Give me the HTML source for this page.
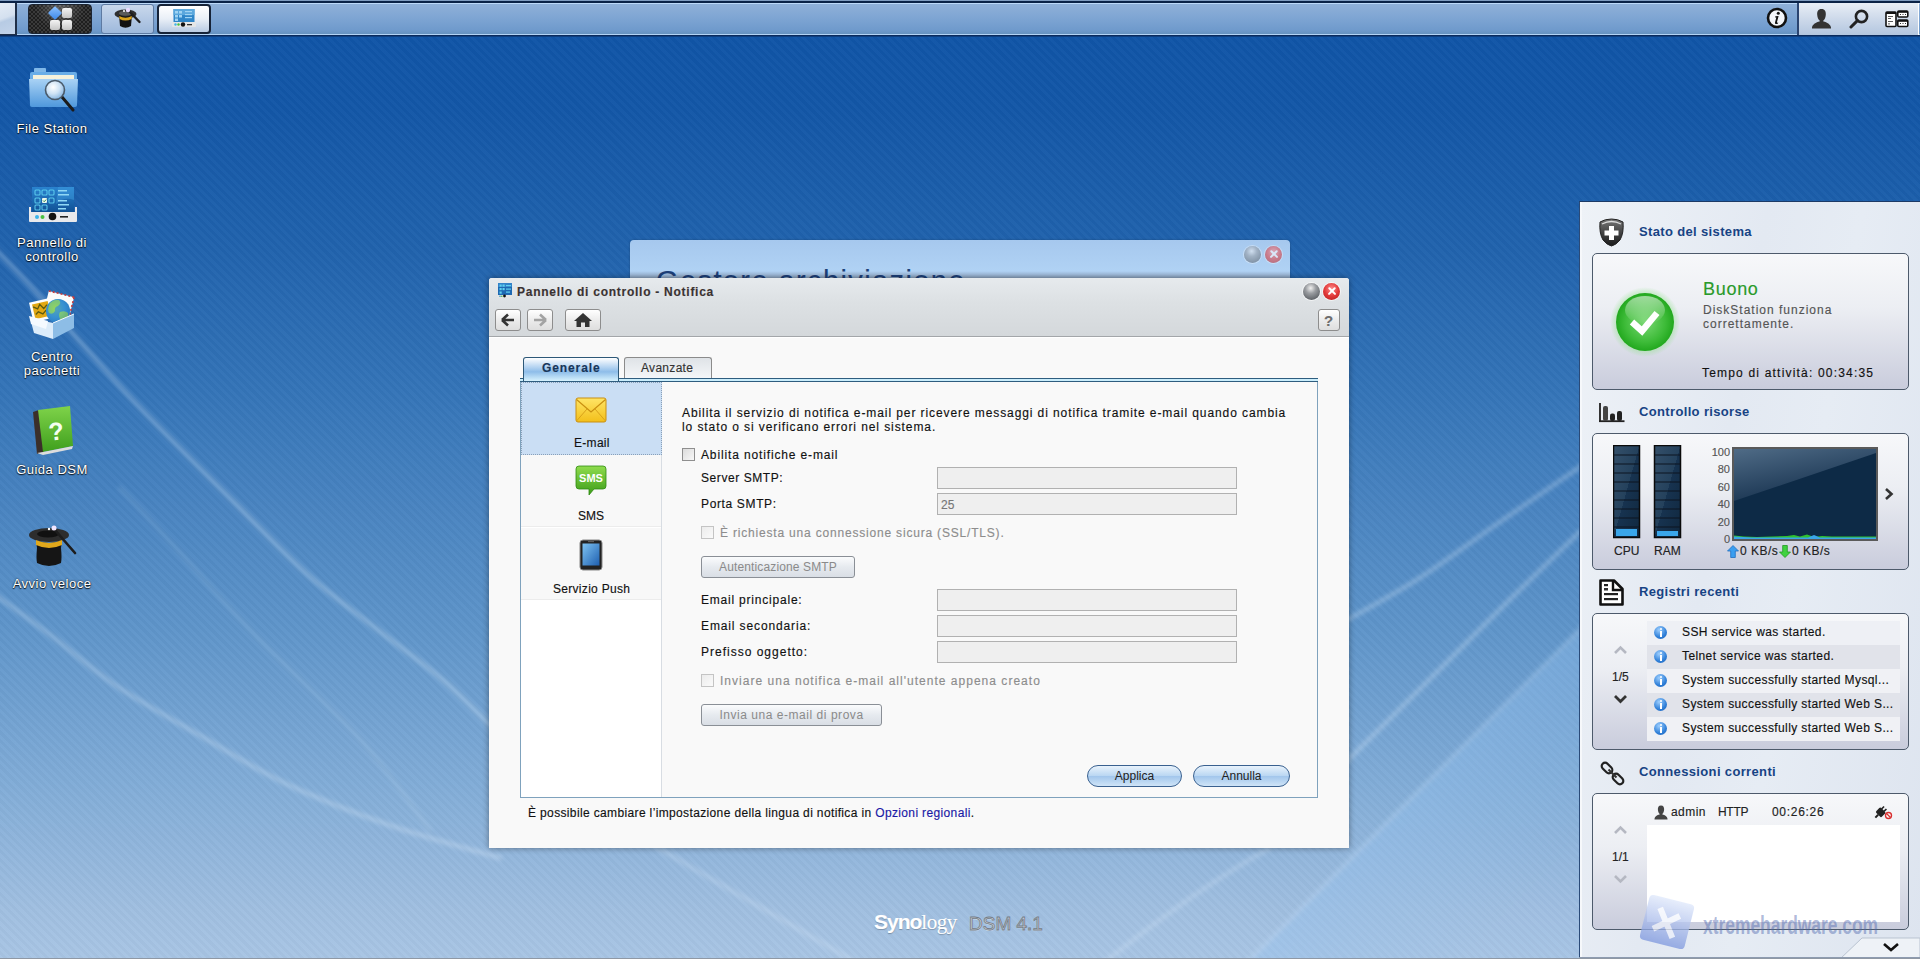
<!DOCTYPE html>
<html><head><meta charset="utf-8">
<style>
*{margin:0;padding:0;box-sizing:border-box}
html,body{width:1920px;height:959px;overflow:hidden}
body{position:relative;font-family:"Liberation Sans",sans-serif;font-size:12px;color:#000;
background:linear-gradient(to bottom,#1055a7 36px,#1357a7 110px,#2163ad 250px,#3474b8 390px,#5f95ca 630px,#7eaad6 770px,#a0bfe0 910px,#a8c5e4 959px);}
.a{position:absolute}
#stripes{position:absolute;left:0;top:0;width:1920px;height:959px;
background:repeating-linear-gradient(45deg,rgba(255,255,255,0.02) 0px,rgba(255,255,255,0.02) 3px,rgba(0,0,0,0.018) 3px,rgba(0,0,0,0.018) 6px);}
/* taskbar */
#taskbar{position:absolute;left:0;top:0;width:1920px;height:37px;
background:linear-gradient(to bottom,#7f9cc0 0px,#7f9cc0 1px,#0a2246 1px,#0a2246 3px,#bcd9f8 3px,#bcd9f8 4px,#8fb0d8 4px,#7ea5d3 18px,#6f9acc 30px,#6693c0 34px,#b2d3f5 34px,#b2d3f5 35px,#0a2a5c 35px,#0a2a5c 36px,#0e3f80 36px,#0e3f80 37px)}
.dl{position:absolute;width:120px;text-align:center;color:#fff;font-size:13px;line-height:13.5px;letter-spacing:0.5px;
text-shadow:0 0 2px rgba(0,0,0,.9),0 1px 1px rgba(0,0,0,.8)}

.win{position:absolute;font-family:"Liberation Sans",sans-serif}
.cbtn{position:absolute;width:17px;height:17px;border-radius:50%}
.gray{background:radial-gradient(circle at 45% 30%,#f0f0f0 0,#9a9da1 35%,#5d6166 80%,#4a4d52 100%);box-shadow:0 0 0 1px rgba(255,255,255,.6)}
.red{background:radial-gradient(circle at 50% 35%,#ff8d8d 0,#e23a3a 50%,#b41818 100%);box-shadow:0 0 0 1px rgba(255,255,255,.6)}
.red:before,.red:after{content:"";position:absolute;left:3.5px;top:7.3px;width:10px;height:2.4px;background:#fff;border-radius:1px;transform:rotate(45deg)}
.red:after{transform:rotate(-45deg)}
.nbtn{position:absolute;top:309px;height:22px;border:1px solid #8d8d8d;border-radius:3px;background:linear-gradient(#ffffff,#ececec 50%,#dedede)}
.tx{position:absolute;white-space:nowrap;font-size:12px;color:#111;-webkit-text-stroke:0.15px currentColor}
.inp{position:absolute;left:937px;width:300px;height:22px;border:1px solid #b1b1b1;background:#efefef}
.chk{position:absolute;width:13px;height:13px;border:1px solid #8f8f8f;background:linear-gradient(135deg,#dcdcdc,#f8f8f8)}
.chk.dis{border-color:#c4c4c4;background:linear-gradient(135deg,#ececec,#fafafa)}
.gbtn{position:absolute;height:22px;border:1px solid #8a8f96;border-radius:3px;background:linear-gradient(#fbfcfd,#e6eaef 50%,#d9dee5);color:#8a8a8a;font-size:12px;text-align:center;line-height:20px}
.pbtn{position:absolute;top:765px;height:22px;border:1px solid #3a6190;border-radius:12px;background:linear-gradient(#e9f3fc,#b9d6f2 50%,#a2c6ec 51%,#cfe4f7);color:#222;font-size:12px;text-align:center;line-height:20px}

.wb{position:absolute;left:1592px;width:317px;border:1px solid #4d5a6b;border-radius:5px;background:linear-gradient(#f7f8fa 0%,#eceef3 40%,#c9ccdc 100%);overflow:hidden}
.wh{position:absolute;left:1639px;font-size:13px;font-weight:bold;color:#174384;white-space:nowrap;letter-spacing:0.35px}
.lr{position:absolute;left:1647px;width:253px;height:24px}
.ii{position:absolute;left:1654px;width:13px;height:13px;border-radius:50%;background:radial-gradient(circle at 40% 30%,#9fd0ff,#2f7fd8 60%,#1c5fb5);}
.ii:before{content:"";position:absolute;left:5.5px;top:2px;width:2px;height:2px;background:#fff;border-radius:1px}
.ii:after{content:"";position:absolute;left:5.5px;top:5px;width:2px;height:6px;background:#fff}
.lt{position:absolute;left:1682px;font-size:12px;color:#111;white-space:nowrap;-webkit-text-stroke:0.15px currentColor;letter-spacing:0.4px}
</style></head>
<body>
<div id="stripes"></div>
<svg class="a" style="left:0;top:0" width="1920" height="959">
 <defs><filter id="bl" x="-10%" y="-10%" width="120%" height="120%"><feGaussianBlur stdDeviation="2"/></filter>
 <filter id="bl2" x="-20%" y="-20%" width="140%" height="140%"><feGaussianBlur stdDeviation="10"/></filter><filter id="bl3" x="-20%" y="-20%" width="140%" height="140%"><feGaussianBlur stdDeviation="3"/></filter></defs>
 <g fill="none" stroke="#e6f3ff" filter="url(#bl)" stroke-linecap="round">
  <path d="M-10.0,244.0 C-2.2,252.1 13.2,267.1 36.5,292.6 C59.8,318.1 96.9,361.9 130.0,397.0 C163.1,432.1 205.5,473.5 235.0,503.0 C264.5,532.5 283.2,552.8 307.0,574.0 C330.8,595.2 355.2,612.2 378.0,630.0 C400.8,647.8 423.7,663.5 444.0,681.0 C464.3,698.5 490.7,726.0 500.0,735.0" stroke-opacity="0.35" stroke-width="4"/>
  <path d="M-10.0,591.0 C0.2,598.4 29.8,619.6 51.0,635.5 C72.2,651.4 92.0,669.6 117.5,686.6 C143.0,703.6 175.9,721.5 204.0,737.7 C232.1,753.9 255.3,769.2 286.0,783.7 C316.7,798.2 352.3,812.2 388.0,824.6 C423.7,837.0 481.3,852.4 500.0,858.0" stroke-opacity="0.33" stroke-width="4"/>
  <path d="M120.0,488.0 C125.5,493.8 130.5,498.5 153.0,523.0 C175.5,547.5 220.8,599.3 255.0,635.0 C289.2,670.7 328.8,704.5 358.0,737.0 C387.2,769.5 418.0,814.5 430.0,830.0" stroke-opacity="0.12" stroke-width="4"/>
  <path d="M650,843 C700,873 780,918 855,962" stroke-opacity="0.25" stroke-width="4"/>
  <path d="M1340.0,624.0 C1353.0,616.5 1391.9,595.6 1418.0,579.0 C1444.1,562.4 1467.7,544.1 1496.4,524.3 C1525.1,504.5 1574.4,470.7 1590.0,460.0" stroke-opacity="0.32" stroke-width="4"/>
  <path d="M1340.0,768.0 C1356.5,751.7 1410.8,698.0 1439.0,670.0 C1467.2,642.0 1484.2,624.7 1509.4,600.0 C1534.6,575.3 1576.6,535.0 1590.0,522.0" stroke-opacity="0.32" stroke-width="4"/>
  <path d="M1105,962 C1170,910 1230,870 1270,848" stroke-opacity="0.25" stroke-width="4"/>
  <path d="M1238,972 L1600,610" stroke-opacity="0.22" stroke-width="4"/>
 </g>
 <linearGradient id="wedge" gradientUnits="userSpaceOnUse" x1="1413" y1="790" x2="1519" y2="896"><stop offset="0" stop-color="#96c3f0" stop-opacity="0.38"/><stop offset="1" stop-color="#96c3f0" stop-opacity="0.06"/></linearGradient>
 <path d="M1238,972 L1600,610 L1600,972 Z" fill="url(#wedge)" filter="url(#bl3)"/>
</svg>


<!-- desktop icons -->
<svg class="a" style="left:0;top:60px" width="110" height="540" viewBox="0 60 110 540">
 <defs>
  <linearGradient id="fold" x1="0" y1="0" x2="0" y2="1"><stop offset="0" stop-color="#a9d2f5"/><stop offset="1" stop-color="#4f98dc"/></linearGradient>
  <radialGradient id="lens" cx="0.4" cy="0.35" r="0.7"><stop offset="0" stop-color="#ffffff"/><stop offset="0.5" stop-color="#cfe3f5"/><stop offset="1" stop-color="#7fb0dd"/></radialGradient>
  <linearGradient id="book" x1="0" y1="0" x2="0" y2="1"><stop offset="0" stop-color="#7fd34a"/><stop offset="1" stop-color="#3f9f1d"/></linearGradient>
  <linearGradient id="box" x1="0" y1="0" x2="0" y2="1"><stop offset="0" stop-color="#e7f3fd"/><stop offset="1" stop-color="#9fc8ea"/></linearGradient>
  <radialGradient id="globe" cx="0.4" cy="0.4" r="0.6"><stop offset="0" stop-color="#9fe07a"/><stop offset="0.6" stop-color="#4aa6d6"/><stop offset="1" stop-color="#2a6fb0"/></radialGradient>
 </defs>
 <!-- File Station -->
 <path d="M34,72 L34,69 Q34,68 35,68 L45,68 Q46,68 46,69 L46,72Z" fill="#7fb7e8"/>
 <rect x="30" y="72" width="47" height="34" rx="2" fill="#6aaee8"/>
 <rect x="33" y="75" width="41" height="5" fill="#f6f2dc"/>
 <path d="M29,79 L78,79 L77,105 Q77,107 75,107 L32,107 Q30,107 30,105Z" fill="url(#fold)"/>
 <line x1="62" y1="97" x2="73" y2="110" stroke="#1b1b1b" stroke-width="3" stroke-linecap="round"/>
 <circle cx="55" cy="90" r="9.5" fill="url(#lens)" stroke="#4a5a6a" stroke-width="1.6"/>
 <!-- Control panel -->
 <defs><linearGradient id="cps" x1="0" y1="0" x2="0" y2="1"><stop offset="0" stop-color="#2a83cf"/><stop offset="1" stop-color="#0f4f93"/></linearGradient></defs>
 <rect x="32" y="187" width="42" height="26" fill="url(#cps)"/>
 <path d="M58,187 L74,187 L74,200 Q64,196 56,204Z" fill="#3b98dc" opacity="0.5"/>
 <g fill="none" stroke="#5fd0f0" stroke-width="1.1" opacity="0.9"><rect x="35" y="190" width="5" height="5" rx="1"/><rect x="42" y="190" width="5" height="5" rx="1"/><rect x="49" y="190" width="5" height="5" rx="1"/>
 <rect x="35" y="198" width="5" height="5" rx="1"/><rect x="49" y="198" width="5" height="5" rx="1"/><rect x="35" y="205" width="5" height="5" rx="1"/><rect x="42" y="205" width="5" height="5" rx="1"/></g>
 <rect x="42" y="198" width="5" height="5" rx="1" fill="#e8f8ee"/><path d="M43,200.5 l1.2,1.2 l2,-2.2" stroke="#1a7a3a" stroke-width="0.9" fill="none"/>
 <g fill="#8fd8f5"><rect x="58" y="190" width="9" height="1.5"/><rect x="58" y="194" width="11" height="1.5"/><rect x="58" y="200" width="9" height="1.5"/><rect x="58" y="204" width="11" height="1.5"/><rect x="58" y="208" width="8" height="1.5"/></g>
 <path d="M29,207 L31,207 L31,212 L75,212 L75,207 L77,207 L77,221 Q77,222 76,222 L30,222 Q29,222 29,221Z" fill="#e9e9ec"/>
 <circle cx="37" cy="217" r="2" fill="#3cb4ea"/><circle cx="42.5" cy="217" r="2" fill="#4ac040"/>
 <circle cx="52.5" cy="216.5" r="3.8" fill="#111"/><rect x="60" y="216" width="8" height="1.6" fill="#222"/>
 <!-- Package center -->
 <g transform="rotate(14 60 304)"><rect x="46" y="294" width="26" height="22" fill="#fbfbfb"/><path d="M46,294 h26" stroke="#c83a3a" stroke-width="1.6" stroke-dasharray="2 2"/><path d="M72,294 v22" stroke="#c83a3a" stroke-width="1.6" stroke-dasharray="2 2"/></g>
 <g transform="rotate(-13 42 310)"><rect x="31" y="300" width="21" height="20" fill="#fdfdfd"/><rect x="33.5" y="302.5" width="16" height="15" fill="#e2a814"/><path d="M34,305 l4,3 l3,-4 l3,5 l4,-3 M35,313 l3,-2 l4,3 l4,-3" stroke="#5c5a10" stroke-width="1.3" fill="none"/></g>
 <circle cx="58" cy="311" r="12" fill="#2d86d0"/>
 <path d="M50,303 q4,-4 9,-3 q3,3 -1,6 q-4,1 -3,5 q-2,4 -6,2 q-2,-4 1,-10Z M60,312 q5,-2 8,1 q1,6 -3,9 q-4,1 -5,-3 q-2,-4 0,-7Z" fill="#8fd14f"/>
 <circle cx="58" cy="311" r="12" fill="url(#globe)" opacity="0.35"/>
 <path d="M30,318 L53,323 L53,339 L34,333Z" fill="#dcecfa"/>
 <path d="M53,323 L74,314 L74,328 L53,339Z" fill="#8dbde6"/>
 <path d="M29,316 L48,321 L46,329 L31,324Z" fill="#f5faff"/>
 <path d="M53,323 L74,314" stroke="#f5faff" stroke-width="1"/>
 <!-- Guida DSM -->
 <path d="M33,412 L39,410 L44,452 L37,454Z" fill="#3b2f2a"/>
 <path d="M38,410 L70,406 L73,446 L43,452Z" fill="url(#book)"/>
 <path d="M37,453 L43,452 L73,446 L72,449 L43,455Z" fill="#ddd"/>
 <text x="56" y="440" font-family="Liberation Sans" font-weight="bold" font-size="25" fill="#f4fff0" text-anchor="middle" transform="rotate(-6 56 430)">?</text>
 <!-- Avvio veloce -->
 <ellipse cx="49" cy="535" rx="20" ry="7" fill="#2d2d2d"/>
 <ellipse cx="48" cy="534" rx="11" ry="3.5" fill="#111"/>
 <path d="M36,540 Q49,546 62,540 L61,548 Q62,558 61,563 Q49,569 37,563 Q36,558 37,548Z" fill="#151515"/>
 <path d="M36,540 Q49,546 62,540 L62,545 Q49,551 36,545Z" fill="#e0a81c"/>
 <line x1="55" y1="530" x2="75" y2="553" stroke="#1d1d1d" stroke-width="2.6" stroke-linecap="round"/>
 <circle cx="54" cy="528" r="2.5" fill="#f1e6ff"/><circle cx="49" cy="529" r="1.2" fill="#fff"/>
</svg>
<div class="dl" style="left:-8px;top:122px">File Station</div>
<div class="dl" style="left:-8px;top:236px">Pannello di<br>controllo</div>
<div class="dl" style="left:-8px;top:350px">Centro<br>pacchetti</div>
<div class="dl" style="left:-8px;top:463px">Guida DSM</div>
<div class="dl" style="left:-8px;top:577px">Avvio veloce</div>

<!-- background window -->
<div class="win" style="left:630px;top:240px;width:660px;height:60px;border-radius:4px 4px 0 0;background:linear-gradient(#a6c8ee 0,#b0d2f4 31px,#9fbbdb 35px,#8aa3bf 38px);box-shadow:0 0 2px rgba(0,0,0,.3);overflow:hidden">
 <div class="tx" style="left:26px;top:25px;font-size:29px;color:#1c3f78;letter-spacing:1.4px">Gestore archiviazione</div>
 <div class="cbtn gray" style="left:614px;top:6px;opacity:.55"></div>
 <div class="cbtn red" style="left:635px;top:6px;opacity:.55"></div>
</div>

<!-- front window -->
<div class="win" style="left:489px;top:278px;width:860px;height:570px;background:#f9f9f9;box-shadow:0 0 6px rgba(0,0,0,.4);border-radius:3px 3px 0 0"></div>
<div class="a" style="left:489px;top:278px;width:860px;height:59px;border-radius:3px 3px 0 0;background:linear-gradient(#e6eaed,#dde1e4 40%,#d4d8db);border-bottom:1px solid #a3a6a9;box-shadow:0 1px 0 #fff"></div>
<svg class="a" style="left:497px;top:283px" width="16" height="15" viewBox="0 0 16 15">
 <rect x="1" y="0" width="14" height="12" fill="#1e69b3"/><rect x="1" y="0" width="14" height="4" fill="#3b8fd3" opacity="0.7"/>
 <g fill="#5fd0f0"><rect x="2.5" y="1.5" width="2.2" height="2.2"/><rect x="5.5" y="1.5" width="2.2" height="2.2"/><rect x="2.5" y="5" width="2.2" height="2.2"/><rect x="5.5" y="5" width="2.2" height="2.2"/><rect x="2.5" y="8.5" width="2.2" height="2.2"/><rect x="9" y="2" width="5" height="1.2"/><rect x="9" y="5.5" width="5" height="1.2"/><rect x="9" y="8.5" width="4" height="1.2"/></g>
 <rect x="0.5" y="12" width="15" height="3" fill="#e4e4e4"/><circle cx="7.5" cy="13" r="1.4" fill="#111"/><circle cx="3" cy="13.3" r="0.8" fill="#39b"/><circle cx="4.8" cy="13.3" r="0.8" fill="#4b4"/>
</svg>
<div class="tx" style="left:517px;top:285px;font-weight:bold;color:#3a3232;font-size:12px;letter-spacing:0.74px">Pannello di controllo - Notifica</div>
<div class="cbtn gray" style="left:1303px;top:283px"></div>
<div class="cbtn red" style="left:1323px;top:283px"></div>
<div class="nbtn" style="left:495px;width:26px"></div>
<svg class="a" style="left:500px;top:313px" width="16" height="14" viewBox="0 0 16 14"><path d="M2,7 L8,1.5 M2,7 L8,12.5 M2,7 L14,7" stroke="#333" stroke-width="2.6" fill="none" stroke-linecap="butt"/></svg>
<div class="nbtn" style="left:527px;width:26px"></div>
<svg class="a" style="left:532px;top:313px" width="16" height="14" viewBox="0 0 16 14"><path d="M14,7 L8,1.5 M14,7 L8,12.5 M14,7 L2,7" stroke="#a3a3a3" stroke-width="2.6" fill="none"/></svg>
<div class="nbtn" style="left:565px;width:36px"></div>
<svg class="a" style="left:573px;top:312px" width="20" height="16" viewBox="0 0 20 16"><path d="M10,1 L1,9 L3.5,9 L3.5,15 L8,15 L8,10.5 L12,10.5 L12,15 L16.5,15 L16.5,9 L19,9Z" fill="#333"/></svg>
<div class="nbtn" style="left:1318px;width:22px;top:309px"></div>
<div class="tx" style="left:1324px;top:312px;font-size:15px;font-weight:bold;color:#6d6d6d">?</div>

<!-- tabs -->
<div class="a" style="left:624px;top:357px;width:88px;height:22px;border:1px solid #8b8b8b;border-bottom:0;border-radius:3px 3px 0 0;background:linear-gradient(#dfe3e7,#f5f7f9)"></div>
<div class="tx" style="left:641px;top:361px;color:#333;letter-spacing:0.3px">Avanzate</div>
<div class="a" style="left:520px;top:378px;width:798px;height:4px;background:#cbeefc;border-top:1px solid #2f5d7f;border-bottom:1px solid #2f5d7f"></div>
<div class="a" style="left:523px;top:357px;width:96px;height:24px;border:1px solid #2d5878;border-bottom:0;border-radius:3px 3px 0 0;background:linear-gradient(#ffffff 0%,#b4d3f1 40%,#8ebde9 60%,#d7f2fd 100%)"></div>
<div class="tx" style="left:542px;top:361px;font-weight:bold;color:#17365a;letter-spacing:0.9px">Generale</div>

<!-- content panel -->
<div class="a" style="left:520px;top:382px;width:798px;height:416px;border:1px solid #7fa2bd;border-top:0;background:#f9f9f9"></div>
<div class="a" style="left:521px;top:382px;width:141px;height:415px;background:#fff;border-right:1px solid #d8dde3"></div>
<div class="a" style="left:521px;top:382px;width:141px;height:73px;background:#cadef4;border:1px dotted #8aa0b8"></div>
<div class="a" style="left:521px;top:455px;width:140px;height:72px;background:#f8f8f8;border-bottom:1px solid #ececec"></div>
<div class="a" style="left:521px;top:528px;width:140px;height:72px;background:#f8f8f8;border-bottom:1px solid #ececec"></div>
<svg class="a" style="left:575px;top:397px" width="33" height="27" viewBox="0 0 33 27">
 <defs><linearGradient id="env" x1="0" y1="0" x2="0" y2="1"><stop offset="0" stop-color="#ffe566"/><stop offset="1" stop-color="#f3bf1a"/></linearGradient></defs>
 <rect x="1" y="1" width="30" height="24" rx="2" fill="url(#env)" stroke="#c98f10" stroke-width="1"/>
 <path d="M1.5,2.5 L16,15 L30.5,2.5" fill="none" stroke="#c98f10" stroke-width="1.2"/>
 <path d="M1.5,24 L12,12 M30.5,24 L20,12" fill="none" stroke="#d9a21a" stroke-width="1"/>
</svg>
<div class="tx" style="left:574px;top:436px;color:#111;letter-spacing:0.3px">E-mail</div>
<svg class="a" style="left:575px;top:465px" width="32" height="32" viewBox="0 0 32 32">
 <defs><linearGradient id="sms" x1="0" y1="0" x2="0" y2="1"><stop offset="0" stop-color="#8fdc4e"/><stop offset="1" stop-color="#3c9c18"/></linearGradient></defs>
 <path d="M4,1 L28,1 Q31,1 31,4 L31,21 Q31,24 28,24 L19,24 L14,30 L14,24 L4,24 Q1,24 1,21 L1,4 Q1,1 4,1Z" fill="url(#sms)" stroke="#2f8a12" stroke-width="0.8"/>
 <text x="16" y="17" font-family="Liberation Sans" font-weight="bold" font-size="11" fill="#fff" text-anchor="middle">SMS</text>
</svg>
<div class="tx" style="left:578px;top:509px;color:#111">SMS</div>
<svg class="a" style="left:579px;top:539px" width="24" height="32" viewBox="0 0 24 32">
 <defs><linearGradient id="ph" x1="0" y1="0" x2="1" y2="1"><stop offset="0" stop-color="#7ec3f2"/><stop offset="1" stop-color="#1e5fb0"/></linearGradient></defs>
 <rect x="1" y="1" width="22" height="30" rx="3" fill="#222" stroke="#888" stroke-width="1"/>
 <rect x="3.5" y="4.5" width="17" height="22" fill="url(#ph)"/>
 <rect x="9" y="2.3" width="6" height="0.8" fill="#777"/>
</svg>
<div class="tx" style="left:553px;top:582px;color:#111;letter-spacing:0.3px">Servizio Push</div>

<!-- form -->
<div class="tx" style="left:682px;top:406px;line-height:14px;color:#111;letter-spacing:0.91px">Abilita il servizio di notifica e-mail per ricevere messaggi di notifica tramite e-mail quando cambia<br>lo stato o si verificano errori nel sistema.</div>
<div class="chk" style="left:682px;top:448px"></div>
<div class="tx" style="left:701px;top:448px;letter-spacing:0.86px">Abilita notifiche e-mail</div>
<div class="tx" style="left:701px;top:471px;letter-spacing:0.57px">Server SMTP:</div>
<div class="inp" style="top:467px"></div>
<div class="tx" style="left:701px;top:497px;letter-spacing:0.64px">Porta SMTP:</div>
<div class="inp" style="top:493px"></div>
<div class="tx" style="left:941px;top:498px;color:#777">25</div>
<div class="chk dis" style="left:701px;top:526px"></div>
<div class="tx" style="left:720px;top:526px;color:#8d8d8d;letter-spacing:0.81px">È richiesta una connessione sicura (SSL/TLS).</div>
<div class="gbtn" style="left:701px;top:556px;width:154px;letter-spacing:0.13px">Autenticazione SMTP</div>
<div class="tx" style="left:701px;top:593px;letter-spacing:0.79px">Email principale:</div>
<div class="inp" style="top:589px"></div>
<div class="tx" style="left:701px;top:619px;letter-spacing:0.875px">Email secondaria:</div>
<div class="inp" style="top:615px"></div>
<div class="tx" style="left:701px;top:645px;letter-spacing:1.0px">Prefisso oggetto:</div>
<div class="inp" style="top:641px"></div>
<div class="chk dis" style="left:701px;top:674px"></div>
<div class="tx" style="left:720px;top:674px;color:#8d8d8d;letter-spacing:1.02px">Inviare una notifica e-mail all'utente appena creato</div>
<div class="gbtn" style="left:701px;top:704px;width:181px;letter-spacing:0.54px">Invia una e-mail di prova</div>
<div class="pbtn" style="left:1087px;width:95px">Applica</div>
<div class="pbtn" style="left:1193px;width:97px">Annulla</div>
<div class="tx" style="left:528px;top:806px;letter-spacing:0.36px">È possibile cambiare l’impostazione della lingua di notifica in <span style="color:#1a1aa6">Opzioni regionali</span>.</div>

<!-- widget panel -->
<div class="a" style="left:1579px;top:201px;width:341px;height:758px;background:linear-gradient(100deg,#eef2f7 0%,#e3e9f2 40%,#e6ecf4 60%,#dde4ef 100%);border-top:1px solid #1c3a66;border-left:1px solid #2a4a78;box-shadow:inset 2px 0 0 #f6f8fb"></div>
<svg class="a" style="left:1598px;top:218px" width="27" height="29" viewBox="0 0 27 29">
 <defs><linearGradient id="sh" x1="0" y1="0" x2="0" y2="1"><stop offset="0" stop-color="#777"/><stop offset="0.5" stop-color="#444"/><stop offset="1" stop-color="#1a1a1a"/></linearGradient></defs>
 <path d="M13.5,1 Q20,1 25,4 Q26,15 22,22 Q18,27 13.5,28 Q9,27 5,22 Q1,15 2,4 Q7,1 13.5,1Z" fill="url(#sh)" stroke="#222" stroke-width="1"/>
 <path d="M4,6 Q13.5,1 23,6" fill="none" stroke="#ddd" stroke-width="1.3"/>
 <path d="M11,8 L16,8 L16,12.5 L20.5,12.5 L20.5,17.5 L16,17.5 L16,22 L11,22 L11,17.5 L6.5,17.5 L6.5,12.5 L11,12.5Z" fill="#fff"/>
</svg>
<div class="wh" style="top:224px">Stato del sistema</div>
<div class="wb" style="top:253px;height:137px"></div>
<svg class="a" style="left:1610px;top:286px" width="72" height="72" viewBox="0 0 72 72">
 <defs><radialGradient id="gc" cx="0.5" cy="0.5" r="0.5"><stop offset="0" stop-color="#7ad874"/><stop offset="0.7" stop-color="#3dbb38"/><stop offset="1" stop-color="#22a81e"/></radialGradient>
 <radialGradient id="gg" cx="0.5" cy="0.5" r="0.5"><stop offset="0.75" stop-color="#8fe08a" stop-opacity="0.6"/><stop offset="1" stop-color="#8fe08a" stop-opacity="0"/></radialGradient>
 <linearGradient id="gl" x1="0" y1="0" x2="0" y2="1"><stop offset="0" stop-color="#fff" stop-opacity="0.55"/><stop offset="1" stop-color="#fff" stop-opacity="0"/></linearGradient></defs>
 <circle cx="35" cy="36" r="35" fill="url(#gg)"/>
 <circle cx="35" cy="36" r="29" fill="url(#gc)"/>
 <ellipse cx="35" cy="24" rx="20" ry="14" fill="url(#gl)"/>
 <path d="M22,36 L32,45 L47,27" fill="none" stroke="#fff" stroke-width="6.5" stroke-linecap="butt" stroke-linejoin="miter"/>
</svg>
<div class="tx" style="left:1703px;top:279px;font-size:18px;color:#2a9a2a;letter-spacing:0.7px">Buono</div>
<div class="tx" style="left:1703px;top:303px;line-height:14px;color:#555;letter-spacing:1.0px">DiskStation funziona<br>correttamente.</div>
<div class="tx" style="left:1702px;top:366px;color:#111;letter-spacing:1.19px">Tempo di attività: 00:34:35</div>

<svg class="a" style="left:1598px;top:402px" width="28" height="21" viewBox="0 0 28 21">
 <rect x="1" y="1" width="2" height="19" fill="#333"/>
 <rect x="1" y="18.3" width="25.5" height="1.8" fill="#222"/>
 <rect x="5" y="4" width="5" height="15" rx="2" fill="#444"/>
 <rect x="12" y="11.5" width="5" height="7.5" rx="2" fill="#222"/>
 <rect x="19" y="9" width="5" height="10" rx="2" fill="#222"/>
</svg>
<div class="wh" style="top:404px">Controllo risorse</div>
<div class="wb" style="top:433px;height:137px"></div>
<svg class="a" style="left:1613px;top:445px" width="70" height="94" viewBox="0 0 70 94">
 <defs><linearGradient id="bar" x1="0" y1="0" x2="1" y2="1"><stop offset="0" stop-color="#35506a"/><stop offset="0.5" stop-color="#24415c"/><stop offset="0.5" stop-color="#173350"/><stop offset="1" stop-color="#10283f"/></linearGradient></defs>
 <g>
  <rect x="0.5" y="0.5" width="26" height="92" fill="url(#bar)" stroke="#0a0a0a" stroke-width="1.5"/>
  <rect x="41.5" y="0.5" width="26" height="92" fill="url(#bar)" stroke="#0a0a0a" stroke-width="1.5"/>
  <g stroke="#0c1520" stroke-width="1.2">
   <path d="M1,10 H26 M1,19 H26 M1,28 H26 M1,37 H26 M1,46 H26 M1,55 H26 M1,64 H26 M1,73 H26 M1,82 H26"/>
   <path d="M42,10 H67 M42,19 H67 M42,28 H67 M42,37 H67 M42,46 H67 M42,55 H67 M42,64 H67 M42,73 H67 M42,82 H67"/>
  </g>
  <rect x="3" y="84" width="21" height="7" fill="#3aa6ea"/>
  <rect x="44" y="86" width="21" height="5" fill="#3aa6ea"/>
 </g>
</svg>
<div class="tx" style="left:1614px;top:544px;color:#222">CPU</div>
<div class="tx" style="left:1654px;top:544px;color:#222">RAM</div>
<div class="tx" style="left:1700px;top:444px;width:30px;text-align:right;font-size:11px;line-height:17.4px;color:#555">100<br>80<br>60<br>40<br>20<br>0</div>
<svg class="a" style="left:1732px;top:447px" width="146" height="94" viewBox="0 0 146 94">
 <defs><linearGradient id="chh" x1="0" y1="0" x2="0.5" y2="1"><stop offset="0" stop-color="#4f6b86"/><stop offset="1" stop-color="#142f4c"/></linearGradient></defs>
 <rect x="1" y="1" width="144" height="92" fill="#0d2a46" stroke="#5a5a5a" stroke-width="2"/>
 <path d="M2,2 L144,2 L144,6 L2,54Z" fill="url(#chh)"/>
 <path d="M2,91 L2,88.5 L12,89.5 L25,90 L40,89.5 L55,89 L62,88 L68,89.5 L75,87.5 L82,90 L90,89 L100,89.5 L120,89.5 L144,89.5 L144,92 L2,92Z" fill="#2fc12f"/>
 <path d="M2,92 L2,89.5 L20,90.5 L40,90.5 L60,90.5 L76,90.5 L82,88 L88,90.5 L110,90.5 L144,90.5 L144,92Z" fill="#3aa6ea"/>
</svg>
<svg class="a" style="left:1883px;top:487px" width="12" height="14" viewBox="0 0 12 14"><path d="M3,2 L8.5,7 L3,12" fill="none" stroke="#333" stroke-width="2.6"/></svg>
<svg class="a" style="left:1727px;top:545px" width="12" height="13" viewBox="0 0 12 13"><path d="M6,0.5 L11.5,6 L8.3,6 L8.3,12.5 L3.7,12.5 L3.7,6 L0.5,6Z" fill="#3a9ef0" stroke="#1f6fc0" stroke-width="0.8"/></svg>
<div class="tx" style="left:1740px;top:544px;font-size:12px;color:#222;letter-spacing:0.5px">0 KB/s</div>
<svg class="a" style="left:1779px;top:545px" width="12" height="13" viewBox="0 0 12 13"><path d="M6,12.5 L11.5,7 L8.3,7 L8.3,0.5 L3.7,0.5 L3.7,7 L0.5,7Z" fill="#3fd23f" stroke="#1f9a1f" stroke-width="0.8"/></svg>
<div class="tx" style="left:1792px;top:544px;font-size:12px;color:#222;letter-spacing:0.5px">0 KB/s</div>

<svg class="a" style="left:1599px;top:579px" width="25" height="27" viewBox="0 0 25 27">
 <path d="M1.5,1.5 L15,1.5 L23.5,10 L23.5,25.5 L1.5,25.5Z" fill="#fff" stroke="#111" stroke-width="2.6" stroke-linejoin="round"/>
 <path d="M14,1.5 L14,11 L23.5,11" fill="none" stroke="#111" stroke-width="2.4"/>
 <rect x="5" y="5" width="4" height="2.2" fill="#222"/><rect x="5" y="9" width="4" height="2.5" fill="#333"/><rect x="5" y="14" width="14" height="2.2" fill="#222"/><rect x="5" y="19" width="14" height="2.2" fill="#222"/>
</svg>
<div class="wh" style="top:584px">Registri recenti</div>
<div class="wb" style="top:613px;height:137px"></div>
<div class="lr" style="top:621px;background:#eef0f5"></div>
<div class="lr" style="top:645px;background:#e1e3ea"></div>
<div class="lr" style="top:669px;background:#f0f1f5"></div>
<div class="lr" style="top:693px;background:#e1e3ea"></div>
<div class="lr" style="top:717px;background:#f0f1f5"></div>
<div class="ii" style="top:626px"></div><div class="lt" style="top:625px">SSH service was started.</div>
<div class="ii" style="top:650px"></div><div class="lt" style="top:649px">Telnet service was started.</div>
<div class="ii" style="top:674px"></div><div class="lt" style="top:673px">System successfully started Mysql...</div>
<div class="ii" style="top:698px"></div><div class="lt" style="top:697px">System successfully started Web S...</div>
<div class="ii" style="top:722px"></div><div class="lt" style="top:721px">System successfully started Web S...</div>
<svg class="a" style="left:1613px;top:645px" width="15" height="10" viewBox="0 0 15 10"><path d="M2,8 L7.5,2.5 L13,8" fill="none" stroke="#b5b8c2" stroke-width="2.6"/></svg>
<div class="tx" style="left:1612px;top:670px;color:#222">1/5</div>
<svg class="a" style="left:1613px;top:694px" width="15" height="10" viewBox="0 0 15 10"><path d="M2,2 L7.5,7.5 L13,2" fill="none" stroke="#333" stroke-width="2.8"/></svg>

<svg class="a" style="left:1600px;top:761px" width="26" height="25" viewBox="0 0 26 25">
 <g fill="none" stroke="#222" stroke-width="2.2">
  <rect x="0.9" y="3.6" width="12.2" height="6.8" rx="3.4" transform="rotate(45 7 7)"/>
  <rect x="11.9" y="14.6" width="12.2" height="6.8" rx="3.4" transform="rotate(45 18 18)"/>
 </g>
 <line x1="8.5" y1="8.5" x2="16.5" y2="16.5" stroke="#333" stroke-width="2.2"/>
</svg>
<div class="wh" style="top:764px">Connessioni correnti</div>
<div class="wb" style="top:793px;height:137px"></div>
<div class="a" style="left:1647px;top:825px;width:253px;height:97px;background:#fff"></div>
<svg class="a" style="left:1654px;top:805px" width="14" height="15" viewBox="0 0 14 15"><path d="M7,0.5 C9.5,0.5 10.3,2.5 10.1,4.8 C10,6.6 9.3,8.3 8.3,8.9 L8.4,9.5 C11,10 13.3,11.5 13.5,13.7 L13.5,14.5 L0.5,14.5 L0.5,13.7 C0.7,11.5 3,10 5.6,9.5 L5.7,8.9 C4.7,8.3 4,6.6 3.9,4.8 C3.7,2.5 4.5,0.5 7,0.5Z" fill="#444"/></svg>
<div class="tx" style="left:1671px;top:805px;color:#222;letter-spacing:0.45px">admin</div>
<div class="tx" style="left:1718px;top:805px;color:#222;letter-spacing:-0.3px">HTTP</div>
<div class="tx" style="left:1772px;top:805px;color:#222;letter-spacing:0.7px">00:26:26</div>
<svg class="a" style="left:1873px;top:805px" width="20" height="15" viewBox="0 0 20 15">
 <g transform="rotate(45 8 7)"><rect x="4" y="4" width="8" height="7" rx="1.5" fill="#222"/><rect x="5.5" y="1" width="1.6" height="3.5" fill="#222"/><rect x="8.9" y="1" width="1.6" height="3.5" fill="#222"/><rect x="7" y="11" width="2" height="4" fill="#222"/></g>
 <circle cx="15.5" cy="10.5" r="3" fill="#fff" stroke="#d83030" stroke-width="1.4"/><line x1="13.5" y1="8.5" x2="17.5" y2="12.5" stroke="#d83030" stroke-width="1.3"/>
</svg>
<svg class="a" style="left:1613px;top:825px" width="15" height="10" viewBox="0 0 15 10"><path d="M2,8 L7.5,2.5 L13,8" fill="none" stroke="#b5b8c2" stroke-width="2.6"/></svg>
<div class="tx" style="left:1612px;top:850px;color:#222">1/1</div>
<svg class="a" style="left:1613px;top:874px" width="15" height="10" viewBox="0 0 15 10"><path d="M2,2 L7.5,7.5 L13,2" fill="none" stroke="#b5b8c2" stroke-width="2.6"/></svg>
<svg class="a" style="left:1840px;top:936px" width="80" height="23" viewBox="0 0 80 23"><path d="M0,23 L22,2 L80,2 L80,23Z" fill="#eef2f7" stroke="#b9c3d1" stroke-width="1"/><path d="M44,8 L51,14 L58,8" fill="none" stroke="#111" stroke-width="2.6"/></svg>
<div class="a" style="left:1579px;top:957px;width:341px;height:2px;background:#8d9bb0"></div>

<!-- watermark -->
<svg class="a" style="left:1630px;top:888px" width="290" height="71" viewBox="0 0 290 71">
 <defs><linearGradient id="wmg" x1="0" y1="0" x2="0" y2="1"><stop offset="0" stop-color="#dfe8fb"/><stop offset="1" stop-color="#7d97de"/></linearGradient></defs>
 <g transform="rotate(14 37 34)" opacity="0.75"><rect x="14" y="11" width="46" height="46" rx="4" fill="url(#wmg)"/><path d="M27,22 L46,48 M48,25 L25,44" stroke="#fff" stroke-opacity="0.8" stroke-width="6"/></g>
 <text x="0" y="46" font-family="Liberation Sans" font-weight="bold" font-size="26" fill="#4f68ae" fill-opacity="0.45" transform="translate(73,0) scale(0.67,1)">xtremehardware.com</text>
</svg>
<!-- logo -->
<div class="tx" style="left:874px;top:910px;font-size:21px;font-weight:bold;color:#fff;letter-spacing:-1px;text-shadow:0 1px 1px rgba(0,0,0,.25)">Syno<span style="font-family:'Liberation Serif',serif;font-weight:normal;letter-spacing:-0.5px">logy</span></div>
<div class="tx" style="left:969px;top:913px;font-size:19px;color:#c9ced4;-webkit-text-stroke:0.8px #747c86;text-shadow:0 1px 0 rgba(255,255,255,.45)">DSM 4.1</div>

<div class="a" style="left:0;top:958px;width:1920px;height:1px;background:#8f98a4"></div>
<div id="taskbar">
 <div class="a" style="left:0;top:3px;width:17px;height:32px;background:linear-gradient(160deg,#e4ecf6 0%,#d4e0ef 45%,#b7cbe4 55%,#c3d4ea 100%);border-right:2px solid #1f2f48;border-bottom:1px solid #1f2f48"></div>
 <div class="a" style="left:28px;top:4px;width:64px;height:30px;border-radius:4px;border:1px solid #1c2533;
   background:radial-gradient(circle at 50% 0%,rgba(255,255,255,.25),rgba(255,255,255,0) 60%),repeating-conic-gradient(#3a3a3a 0 25%,#1e1e1e 0 50%) 0 0/4px 4px"></div>
 <div class="a" style="left:50px;top:8px;width:10px;height:10px;background:linear-gradient(135deg,#8fc3ff,#3a86e8);transform:rotate(45deg);border-radius:1px"></div>
 <div class="a" style="left:62px;top:8px;width:10px;height:10px;background:linear-gradient(#f4f4f4,#c6c6c6);border-radius:2px"></div>
 <div class="a" style="left:50px;top:20px;width:10px;height:10px;background:linear-gradient(#f4f4f4,#c6c6c6);border-radius:2px"></div>
 <div class="a" style="left:62px;top:20px;width:10px;height:10px;background:linear-gradient(#f4f4f4,#c6c6c6);border-radius:2px"></div>
 <div class="a" style="left:101px;top:4px;width:53px;height:30px;border-radius:3px;border:1px solid #5d7aa2;background:linear-gradient(#c9d8ec,#9eb9dc)"></div>
 <svg class="a" style="left:114px;top:6px" width="28" height="23" viewBox="0 0 28 23">
  <ellipse cx="11.5" cy="8" rx="11" ry="4.6" fill="#2f2f2f"/><ellipse cx="11.5" cy="7.3" rx="6.5" ry="2.4" fill="#5a5a5a"/>
  <path d="M5,9 L6,20 Q11.5,23.5 17,20 L18,9 Q11.5,12.5 5,9Z" fill="#121212"/>
  <path d="M5.2,10 Q11.5,13.5 17.8,10 L17.6,13 Q11.5,16 5.5,13Z" fill="#d9a21b"/>
  <line x1="14" y1="4" x2="25.5" y2="16" stroke="#1e1e1e" stroke-width="2.4" stroke-linecap="round"/>
  <circle cx="14" cy="4" r="2.2" fill="#eadcff"/><circle cx="10" cy="5" r="1" fill="#fff"/>
 </svg>
 <div class="a" style="left:157px;top:4px;width:54px;height:30px;border-radius:4px;border:2px solid #162338;background:linear-gradient(#ffffff,#e9eff7 50%,#b9cbe3)"></div>
 <svg class="a" style="left:172px;top:8px" width="24" height="20" viewBox="0 0 24 20">
  <rect x="1.5" y="1" width="21" height="13" fill="#2f86c9"/><rect x="1.5" y="1" width="21" height="6" fill="#5aa7dd"/>
  <g fill="#9fd3f3"><rect x="3" y="3" width="3" height="2.5"/><rect x="7" y="3" width="3" height="2.5"/><rect x="3" y="7" width="3" height="2.5"/><rect x="7" y="7" width="3" height="2.5"/><rect x="3" y="10.5" width="3" height="2.5"/>
  <rect x="13" y="3" width="7" height="1.2"/><rect x="13" y="6" width="7" height="1.2"/><rect x="13" y="9" width="7" height="1.2"/></g>
  <rect x="0" y="14" width="24" height="5" rx="1" fill="#e6e6e6"/><circle cx="11" cy="16.5" r="2.2" fill="#111"/>
  <circle cx="3.5" cy="16.5" r="1.2" fill="#3fb3e8"/><circle cx="6.5" cy="16.5" r="1.2" fill="#48c040"/><rect x="15" y="16" width="5" height="1.3" fill="#333"/>
 </svg>
 <!-- right -->
 <svg class="a" style="left:1766px;top:7px" width="22" height="22" viewBox="0 0 22 22">
  <circle cx="11" cy="11" r="9" fill="#f4f6fa" stroke="#111" stroke-width="2.6"/>
  <circle cx="12.3" cy="6.3" r="1.5" fill="#111"/>
  <path d="M9.3,9.2 L12.6,9 L11,15 Q10.8,16 12.2,15.4 L12,16.6 Q9.8,17.6 9.1,16.6 Q8.8,16 9.2,14.8 L10.3,10.6 L9.2,10.6Z" fill="#111"/>
 </svg>
 <div class="a" style="left:1797px;top:3px;width:2px;height:32px;background:#2a4470"></div>
 <div class="a" style="left:1799px;top:3px;width:120px;height:32px;background:linear-gradient(#e8eef6,#cdd9ea 50%,#b3c6df);border-right:1px solid #fff"></div>
 <svg class="a" style="left:1811px;top:8px" width="21" height="21" viewBox="0 0 21 21">
  <path d="M10.5,1 C14,1 15,3.5 14.8,6.8 C14.6,9.6 13.6,12 12.2,12.8 L12.4,13.6 C16,14.4 19.5,16.4 20,19.5 L20,20.5 L1,20.5 L1,19.5 C1.5,16.4 5,14.4 8.6,13.6 L8.8,12.8 C7.4,12 6.4,9.6 6.2,6.8 C6,3.5 7,1 10.5,1Z" fill="#333"/>
 </svg>
 <svg class="a" style="left:1849px;top:9px" width="21" height="20" viewBox="0 0 21 20">
  <circle cx="12.5" cy="7.5" r="5.6" fill="none" stroke="#222" stroke-width="2.6"/>
  <line x1="8.4" y1="11.6" x2="2" y2="18" stroke="#222" stroke-width="3" stroke-linecap="round"/>
 </svg>
 <svg class="a" style="left:1885px;top:10px" width="24" height="18" viewBox="0 0 24 18">
  <rect x="1" y="2" width="10" height="14.5" rx="1" fill="#fff" stroke="#111" stroke-width="1.6"/>
  <rect x="12.8" y="1" width="10" height="6" rx="1" fill="#fff" stroke="#111" stroke-width="1.6"/>
  <rect x="12.8" y="10" width="10" height="6.5" rx="1" fill="#fff" stroke="#111" stroke-width="1.6"/>
  <rect x="1" y="2" width="10" height="2" fill="#111"/><rect x="12.8" y="1" width="10" height="1.8" fill="#111"/><rect x="12.8" y="10" width="10" height="1.8" fill="#111"/>
  <g fill="#333"><rect x="3" y="6" width="5" height="0.8"/><rect x="3" y="8" width="3" height="0.8"/><rect x="3" y="11" width="5" height="0.8"/><rect x="3" y="13.5" width="2" height="0.8"/>
  <rect x="15" y="4" width="1" height="1"/><rect x="17.5" y="4" width="1" height="1"/><rect x="20" y="4" width="1" height="1"/>
  <rect x="15" y="13" width="1" height="1"/><rect x="17.5" y="13" width="1" height="1"/><rect x="20" y="13" width="1" height="1"/></g>
 </svg>
</div>

</body></html>
